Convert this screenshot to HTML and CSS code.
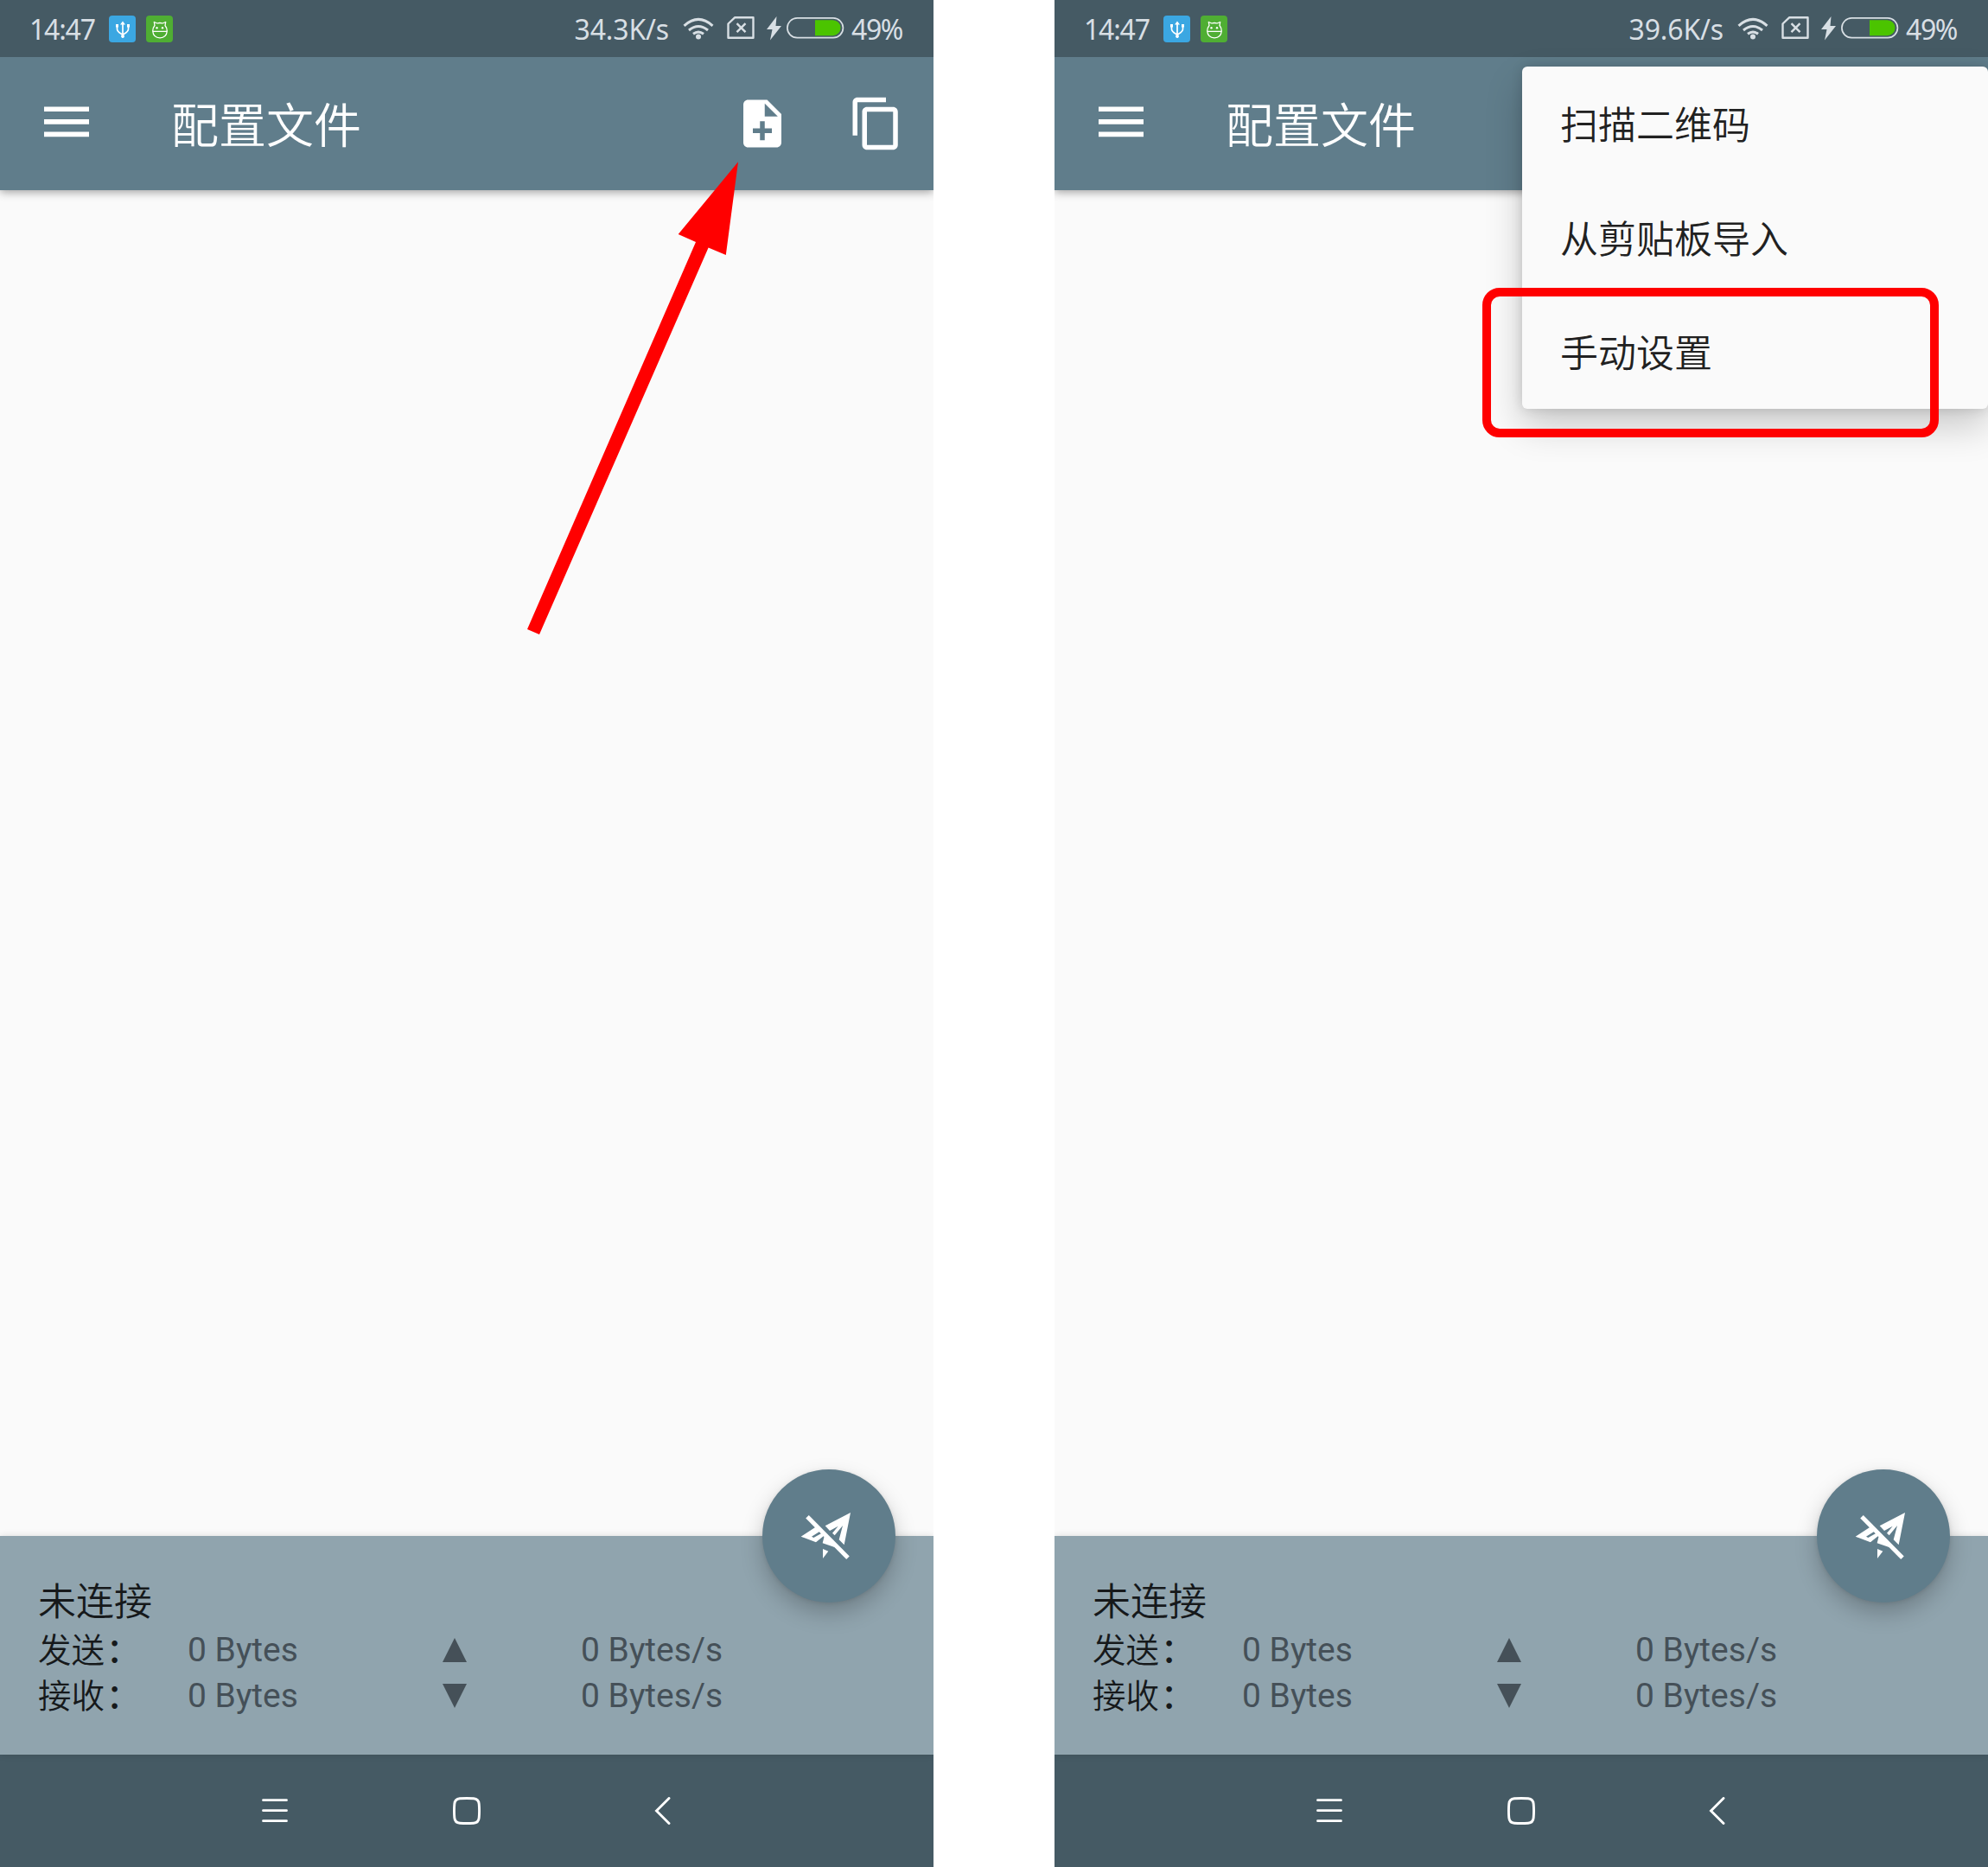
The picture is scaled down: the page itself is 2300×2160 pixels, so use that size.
FILE: index.html
```html
<!DOCTYPE html>
<html lang="zh-CN">
<head>
<meta charset="utf-8">
<title>配置文件</title>
<link rel="stylesheet" href="styles.css">
</head>
<body>
<svg class="defs" aria-hidden="true">
  <symbol id="usb" viewBox="0 0 31 31">
    <path d="M16 9v17M9.500 12v3.500c0 3.500 3 4.500 6.500 6.500c3.500-2 6.500-3 6.500-6.500V12" fill="none" stroke="#fff" stroke-width="1.700"/>
    <path d="M16 6.500l3 4h-6zM8 10h3v3.500H8zM21 10h3v3.500h-3zM14.200 22.500h3.600v2.800h-3.600z" fill="#fff"/>
  </symbol>
  <symbol id="droid" viewBox="0 0 31 31">
    <path d="M10 11.500L9.300 7.500l3.700 1.500q3-1 6 0l3.700-1.500-.7 4q2.500 3 2.300 6.500-.7 7.500-8.300 7.800-7.600-.3-8.300-7.800Q7.500 14.500 10 11.500zM7.800 18.300h16.400" fill="none" stroke="#fff" stroke-width="1.300" stroke-linejoin="round"/>
    <circle cx="12.500" cy="14.300" r="1.200" fill="#fff"/><circle cx="19" cy="14.300" r="1.200" fill="#fff"/>
  </symbol>
  <symbol id="wifi" viewBox="0 0 36 26">
    <path d="M1.500 9.800Q18-5 34.500 9.800M7 15q11-9 22 0M12 19.300q6-4.600 12 0" fill="none" stroke="#d8dfe4" stroke-width="3"/>
    <circle cx="18" cy="22.600" r="3" fill="#d8dfe4"/>
  </symbol>
  <symbol id="sim" viewBox="0 0 32 26">
    <path d="M9 1.300h21.500v23.400h-29V8.500z" fill="none" stroke="#d8dfe4" stroke-width="2.400" stroke-linejoin="round"/>
    <path d="M11.500 8.200l10 10M21.500 8.200l-10 10" stroke="#d8dfe4" stroke-width="2.400"/>
  </symbol>
  <symbol id="bolt" viewBox="0 0 17 28">
    <path d="M11.500 0L0 15h6.500L4 27.500 17 11h-6.500z" fill="#d8dfe4"/>
  </symbol>
  <symbol id="battery" viewBox="0 0 67 25">
    <path d="M33 3.200h20.500a9 9 0 0 1 9 9 9 9 0 0 1-9 9H33z" fill="#4bc400"/>
    <rect x=".9" y=".9" width="64.500" height="22.800" rx="11.400" fill="none" stroke="#d8dfe4" stroke-width="1.700"/>
  </symbol>
  <symbol id="menu" viewBox="0 0 52 36">
    <path d="M0 .4h52v5.700H0zM0 15h52v5.700H0zM0 29.500h52v5.700H0z" fill="#fff"/>
  </symbol>
  <symbol id="note-add" viewBox="0 0 24 24">
    <path d="M14 2H6c-1.100 0-1.990.9-1.990 2L4 20c0 1.100.89 2 1.990 2H18c1.100 0 2-.9 2-2V8l-6-6zm2 14h-3v3h-2v-3H8v-2h3v-3h2v3h3v2zm-3-7V3.500L18.500 9H13z" fill="#fff"/>
  </symbol>
  <symbol id="copy" viewBox="0 0 24 24">
    <path d="M16 1H4c-1.100 0-2 .9-2 2v14h2V3h12V1zm3 4H8c-1.100 0-2 .9-2 2v14c0 1.100.9 2 2 2h11c1.100 0 2-.9 2-2V7c0-1.100-.9-2-2-2zm0 16H8V7h11v14z" fill="#fff"/>
  </symbol>
  <symbol id="plane-off" viewBox="12 0 210 210">
    <path d="M42 38L183 181" stroke="#fff" stroke-width="15"/>
    <path d="M192 24L104 70l16 17 29-16-20 24 8 8 28-34-13 49 18 18zM20 107L74 72l15 15-32 20 7 4 27-15 9 8-28 23zM103 98l-8 32 70 24zM96 150l19 8-19 25z" fill="#fff"/>
  </symbol>
  <symbol id="recents" viewBox="0 0 32 32">
    <path d="M2.500 3.700h27M2.500 15.700h27M2.500 27.700h27" stroke="#fff" stroke-width="2.800" stroke-linecap="round"/>
  </symbol>
  <symbol id="home" viewBox="0 0 32 32">
    <path d="M8 1.800Q16 1.100 24 1.800Q29.700 2.300 30.200 8Q30.900 16 30.200 24Q29.700 29.700 24 30.200Q16 30.900 8 30.200Q2.300 29.700 1.800 24Q1.100 16 1.800 8Q2.300 2.300 8 1.800z" fill="none" stroke="#fff" stroke-width="2.900"/>
  </symbol>
  <symbol id="back" viewBox="0 0 32 32">
    <path d="M28 1.500L13.500 16 28 30.500" fill="none" stroke="#fff" stroke-width="2.900" stroke-linecap="round"/>
  </symbol>
</svg>

<main class="screens">
  <section class="phone">
    <header class="status">
      <span class="clock">14:47</span>
      <svg class="chip chip-usb"><use href="#usb"/></svg>
      <svg class="chip chip-droid"><use href="#droid"/></svg>
      <span class="speed">34.3K/s</span>
      <svg class="wifi"><use href="#wifi"/></svg>
      <svg class="sim"><use href="#sim"/></svg>
      <svg class="bolt"><use href="#bolt"/></svg>
      <svg class="battery"><use href="#battery"/></svg>
      <span class="percent">49%</span>
    </header>
    <div class="appbar">
      <svg class="burger"><use href="#menu"/></svg>
      <h1 class="title">配置文件</h1>
      <svg class="action"><use href="#note-add"/></svg>
      <svg class="action"><use href="#copy"/></svg>
    </div>
    <div class="content"></div>
    <footer class="stats">
      <p class="state">未连接</p>
      <div class="row"><span class="label">发送<span class="colon">：</span></span><span class="total">0 Bytes</span><svg class="tri" viewBox="0 0 28 28"><path d="M14 0l14 28H0z"/></svg><span>0 Bytes/s</span></div>
      <div class="row"><span class="label">接收<span class="colon">：</span></span><span class="total">0 Bytes</span><svg class="tri" viewBox="0 0 28 28"><path d="M0 0h28L14 28z"/></svg><span>0 Bytes/s</span></div>
      <button class="fab"><svg class="plane"><use href="#plane-off"/></svg></button>
    </footer>
    <nav class="nav">
      <svg class="key"><use href="#recents"/></svg>
      <svg class="key"><use href="#home"/></svg>
      <svg class="key"><use href="#back"/></svg>
    </nav>
    <svg class="arrow" viewBox="0 0 246 550"><path d="M244 3.300L229.800 111l-20.200-8.500L14 550 0 544 195 96 174.700 87z" fill="#f00"/></svg>
  </section>

  <section class="phone">
    <header class="status">
      <span class="clock">14:47</span>
      <svg class="chip chip-usb"><use href="#usb"/></svg>
      <svg class="chip chip-droid"><use href="#droid"/></svg>
      <span class="speed">39.6K/s</span>
      <svg class="wifi"><use href="#wifi"/></svg>
      <svg class="sim"><use href="#sim"/></svg>
      <svg class="bolt"><use href="#bolt"/></svg>
      <svg class="battery"><use href="#battery"/></svg>
      <span class="percent">49%</span>
    </header>
    <div class="appbar">
      <svg class="burger"><use href="#menu"/></svg>
      <h1 class="title">配置文件</h1>
    </div>
    <div class="content"></div>
    <footer class="stats">
      <p class="state">未连接</p>
      <div class="row"><span class="label">发送<span class="colon">：</span></span><span class="total">0 Bytes</span><svg class="tri" viewBox="0 0 28 28"><path d="M14 0l14 28H0z"/></svg><span>0 Bytes/s</span></div>
      <div class="row"><span class="label">接收<span class="colon">：</span></span><span class="total">0 Bytes</span><svg class="tri" viewBox="0 0 28 28"><path d="M0 0h28L14 28z"/></svg><span>0 Bytes/s</span></div>
      <button class="fab"><svg class="plane"><use href="#plane-off"/></svg></button>
    </footer>
    <nav class="nav">
      <svg class="key"><use href="#recents"/></svg>
      <svg class="key"><use href="#home"/></svg>
      <svg class="key"><use href="#back"/></svg>
    </nav>
    <ul class="popup">
      <li>扫描二维码</li>
      <li>从剪贴板导入</li>
      <li>手动设置</li>
    </ul>
    <div class="highlight"></div>
  </section>
</main>
</body>
</html>
```
FILE: styles.css
```css
* { box-sizing: border-box; }

body {
  margin: 0;
  background: #fff;
  font-family: Roboto, "Noto Sans CJK SC", sans-serif;
}

svg { display: block; flex: none; }
.defs { position: absolute; width: 0; height: 0; }

.screens { display: flex; gap: 140px; }

.phone {
  position: relative;
  display: flex;
  flex-direction: column;
  width: 1080px;
  height: 2160px;
  overflow: hidden;
  background: #fafafa;
}

.status {
  position: relative;
  display: flex;
  align-items: center;
  height: 66px;
  padding: 0 36px 0 34px;
  background: #455a64;
  color: #d8dfe4;
  font: 32px/66px "Noto Sans", sans-serif;
  white-space: nowrap;
}
.clock { width: 92px; padding-top: 1px; letter-spacing: -1.2px; }
.chip { width: 31px; height: 31px; margin-right: 12px; border-radius: 4px; }
.chip-usb { background: #3ba7e2; }
.chip-droid { background: #4fae33; }
.speed { margin-left: auto; padding-top: 1px; letter-spacing: -.15px; }
.wifi { width: 36px; height: 26px; margin: 0 15px 1px 16px; }
.sim { width: 32px; height: 26px; margin: 0 14px 2px 0; }
.bolt { width: 17px; height: 28px; margin-right: 6px; }
.battery { width: 67px; height: 25px; margin: 0 8px 1px 0; }
.percent { width: 59px; padding-top: 1px; letter-spacing: -1.4px; }

.appbar {
  display: flex;
  align-items: center;
  height: 154px;
  padding: 0 33px 0 51px;
  background: #607d8b;
  color: #fff;
  box-shadow: 0 2px 10px rgba(0, 0, 0, .38);
}
.burger { width: 52px; height: 36px; margin: 0 95px 4px 0; }
.title { flex: 1; margin: 0; padding-top: 6px; font-size: 55px; font-weight: 350; line-height: 80px; }
.action { width: 66px; height: 66px; margin-left: 66px; }

.content { flex: 1; }

.stats {
  position: relative;
  height: 253px;
  padding: 48px 44px 0;
  background: #90a4ae;
  color: #16191b;
  box-shadow: 0 0 8px rgba(0, 0, 0, .12);
}
.state { margin: 0; font-size: 44px; font-weight: 350; line-height: 58px; }
.row {
  display: flex;
  align-items: center;
  height: 53px;
  font-size: 39px;
  line-height: 53px;
  color: #455058;
}
.label { width: 173px; color: #16191b; font-size: 38.5px; font-weight: 350; }
.colon { margin-left: 2px; font-weight: 500; }
.total { width: 295px; }
.tri { width: 28px; height: 28px; margin: 0 132px 2px 0; fill: #455058; }

.fab {
  position: absolute;
  top: -77px;
  right: 44px;
  display: grid;
  place-items: center;
  width: 154px;
  height: 154px;
  padding: 0;
  border: 0;
  border-radius: 50%;
  background: #607d8b;
  box-shadow: 0 12px 26px rgba(0, 0, 0, .22), 0 1px 5px rgba(0, 0, 0, .1);
}
.plane { width: 70px; height: 70px; }

.nav {
  display: flex;
  justify-content: center;
  align-items: center;
  gap: 190px;
  height: 130px;
  background: #455a64;
}
.key { width: 32px; height: 32px; }

.arrow { position: absolute; left: 610px; top: 184px; width: 246px; height: 550px; }

.popup {
  position: absolute;
  top: 77px;
  right: 0;
  width: 539px;
  margin: 0;
  padding: 0 44px;
  border-radius: 6px;
  background: #fafafa;
  box-shadow: 0 20px 44px rgba(0, 0, 0, .2), 0 0 14px rgba(0, 0, 0, .14);
  color: #212121;
  font-size: 44px;
  font-weight: 350;
  line-height: 132px;
  list-style: none;
}
.popup li { height: 132px; padding-top: 3px; }

.highlight {
  position: absolute;
  left: 495px;
  top: 333px;
  width: 528px;
  height: 173px;
  border: 10px solid #f00;
  border-radius: 20px;
}
```
